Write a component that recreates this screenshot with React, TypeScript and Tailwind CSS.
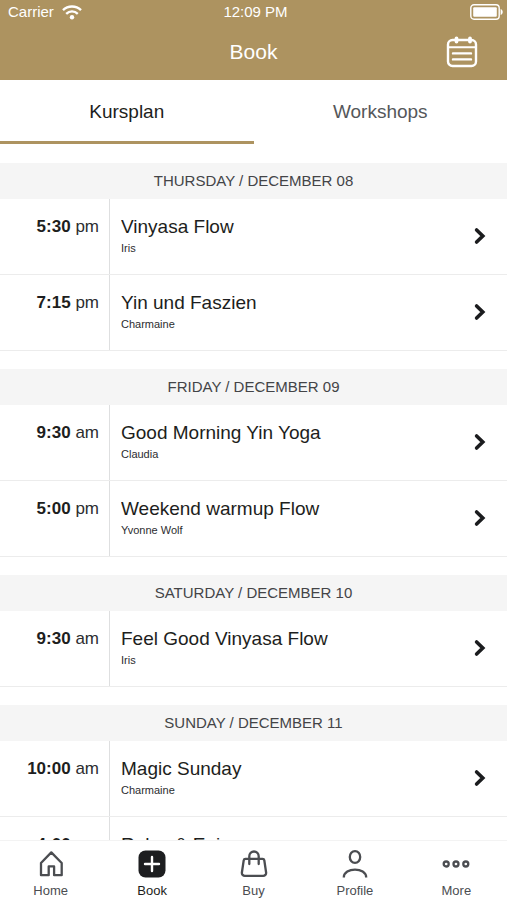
import type { ReactNode } from 'react';

type Course = {
  time: string;
  period: string;
  title: string;
  teacher: string;
};

type Day = {
  label: string;
  courses: Course[];
};

const days: Day[] = [
  {
    label: 'THURSDAY / DECEMBER 08',
    courses: [
      { time: '5:30', period: 'pm', title: 'Vinyasa Flow', teacher: 'Iris' },
      { time: '7:15', period: 'pm', title: 'Yin und Faszien', teacher: 'Charmaine' },
    ],
  },
  {
    label: 'FRIDAY / DECEMBER 09',
    courses: [
      { time: '9:30', period: 'am', title: 'Good Morning Yin Yoga', teacher: 'Claudia' },
      { time: '5:00', period: 'pm', title: 'Weekend warmup Flow', teacher: 'Yvonne Wolf' },
    ],
  },
  {
    label: 'SATURDAY / DECEMBER 10',
    courses: [{ time: '9:30', period: 'am', title: 'Feel Good Vinyasa Flow', teacher: 'Iris' }],
  },
  {
    label: 'SUNDAY / DECEMBER 11',
    courses: [
      { time: '10:00', period: 'am', title: 'Magic Sunday', teacher: 'Charmaine' },
      { time: '4:00', period: 'pm', title: 'Relax & Enjoy', teacher: 'Iris' },
    ],
  },
];

function StatusBar() {
  return (
    <div className="grid h-6 grid-cols-3 items-center pl-2 pr-1 text-[15px]">
      <div className="flex items-center gap-2">
        <span>Carrier</span>
        <svg viewBox="0 0 20 15" className="h-[15px] w-5" fill="none" stroke="currentColor" strokeWidth="2.4" aria-hidden="true">
          <path d="M1 5.2C6 0.3 14 0.3 19 5.2" />
          <path d="M4.2 8.8C7.6 5.6 12.4 5.6 15.8 8.8" />
          <circle cx="10" cy="12.2" r="2.2" fill="currentColor" stroke="none" />
        </svg>
      </div>
      <span className="text-center">12:09 PM</span>
      <svg viewBox="0 0 33 16" className="h-4 w-[33px] justify-self-end" aria-hidden="true">
        <rect x="0.8" y="0.8" width="28.4" height="14.4" rx="3.2" fill="none" stroke="currentColor" strokeWidth="1.4" />
        <rect x="3.2" y="3.2" width="23.6" height="9.6" rx="1" fill="currentColor" />
        <path d="M30.6 5v6c1.5-.5 2.1-1.7 2.1-3s-.6-2.5-2.1-3Z" fill="currentColor" />
      </svg>
    </div>
  );
}

function CalendarIcon() {
  return (
    <svg viewBox="0 0 32 32" className="size-8" fill="none" stroke="currentColor" strokeWidth="2.4" strokeLinecap="round" aria-hidden="true">
      <rect x="2" y="4" width="28" height="26" rx="4.5" />
      <path d="M2 11.2h28" strokeWidth="2" />
      <path d="M10.5 2.4v3.2M24 2.4v3.2" strokeWidth="3.8" />
      <path d="M7 17.4h18M7 23.4h18" />
    </svg>
  );
}

function CourseRow({ course }: { course: Course }) {
  return (
    <li className="border-b border-[#ececec]">
      <a href="#course" className="flex h-[75px]">
        <div className="w-[110px] shrink-0 border-r border-[#dedfe0] pr-[10px] pt-4 text-right text-[17px] leading-6 text-[#2c2d2f]">
          <b className="text-[#1d1e20]">{course.time}</b> {course.period}
        </div>
        <div className="min-w-0 flex-1 pl-[11px] pt-4">
          <h3 className="truncate text-[19px] leading-6 text-[#1d1e20]">{course.title}</h3>
          <p className="mt-px text-[11px] leading-4 text-[#2c2d2f]">{course.teacher}</p>
        </div>
        <svg viewBox="0 0 14 18" className="mb-[2px] mr-5 h-[18px] w-[14px] self-center" fill="none" stroke="#1b1c1e" strokeWidth="3.6" strokeLinecap="round" aria-hidden="true">
          <path d="M3.6 3 9.8 9l-6.2 6" />
        </svg>
      </a>
    </li>
  );
}

function NavItem({ label, active, children }: { label: string; active?: boolean; children: ReactNode }) {
  return (
    <a
      href={`#${label.toLowerCase()}`}
      className={`flex flex-1 flex-col items-center pt-2 ${active ? 'text-[#1d1e20]' : 'text-[#4b4d51]'}`}
    >
      <svg viewBox="0 0 30 30" className="size-[30px]" fill="none" stroke="currentColor" strokeWidth="2.3" aria-hidden="true">
        {children}
      </svg>
      <span className="mt-1 text-[13px] leading-4">{label}</span>
    </a>
  );
}

export default function App() {
  return (
    <div className="flex h-screen flex-col overflow-hidden bg-white font-['Liberation_Sans',Arial,sans-serif]">
      <header className="h-20 shrink-0 bg-[#ad9360] text-white">
        <StatusBar />
        <div className="grid h-14 grid-cols-[1fr_auto_1fr] items-center">
          <h1 className="col-start-2 text-[21px]">Book</h1>
          <button type="button" aria-label="Calendar" className="mr-[29px] justify-self-end">
            <CalendarIcon />
          </button>
        </div>
      </header>

      <nav className="flex h-16 shrink-0 text-[19px]">
        <button type="button" className="flex-1 border-b-[3px] border-[#ad9360] pt-1 text-[#1d1e20]">
          Kursplan
        </button>
        <button type="button" className="flex-1 border-b-[3px] border-transparent pt-1 text-[#55575a]">
          Workshops
        </button>
      </nav>

      <main className="min-h-0 flex-1 overflow-hidden pt-px">
        {days.map((day) => (
          <section key={day.label} className="pt-[18px]">
            <h2 className="bg-[#f5f5f5] text-center text-[15px] leading-9 text-[#434447]">{day.label}</h2>
            <ul>
              {day.courses.map((course) => (
                <CourseRow key={course.time} course={course} />
              ))}
            </ul>
          </section>
        ))}
      </main>

      <nav className="flex h-[60px] shrink-0 border-t border-[#f3f3f3] bg-white">
        <NavItem label="Home">
          <path d="M5 14 15.3 3.4 25.7 14v12.2h-7.6v-8.8h-5.4v8.8H5Z" strokeLinejoin="round" />
        </NavItem>
        <NavItem label="Book" active>
          <rect x="1.5" y="1.5" width="27" height="27" rx="7" fill="currentColor" stroke="none" />
          <path d="M15 8v14M8 15h14" stroke="white" strokeWidth="2.4" strokeLinecap="round" />
        </NavItem>
        <NavItem label="Buy">
          <path d="M6.5 9.8h17a1.8 1.8 0 0 1 1.8 1.5l1.8 12.2a3 3 0 0 1-3 3.4H5.9a3 3 0 0 1-3-3.4l1.8-12.2a1.8 1.8 0 0 1 1.8-1.5Z" />
          <path d="M10.3 15V7.2a4.7 4.7 0 0 1 9.4 0V15" strokeLinecap="round" />
        </NavItem>
        <NavItem label="Profile">
          <ellipse cx="15" cy="8" rx="5.2" ry="5.9" />
          <path d="M3.8 28.5c0-10.6 22.4-10.6 22.4 0" />
        </NavItem>
        <NavItem label="More">
          <circle cx="5.2" cy="15" r="2.5" />
          <circle cx="15" cy="15" r="2.5" />
          <circle cx="24.8" cy="15" r="2.5" />
        </NavItem>
      </nav>
    </div>
  );
}
